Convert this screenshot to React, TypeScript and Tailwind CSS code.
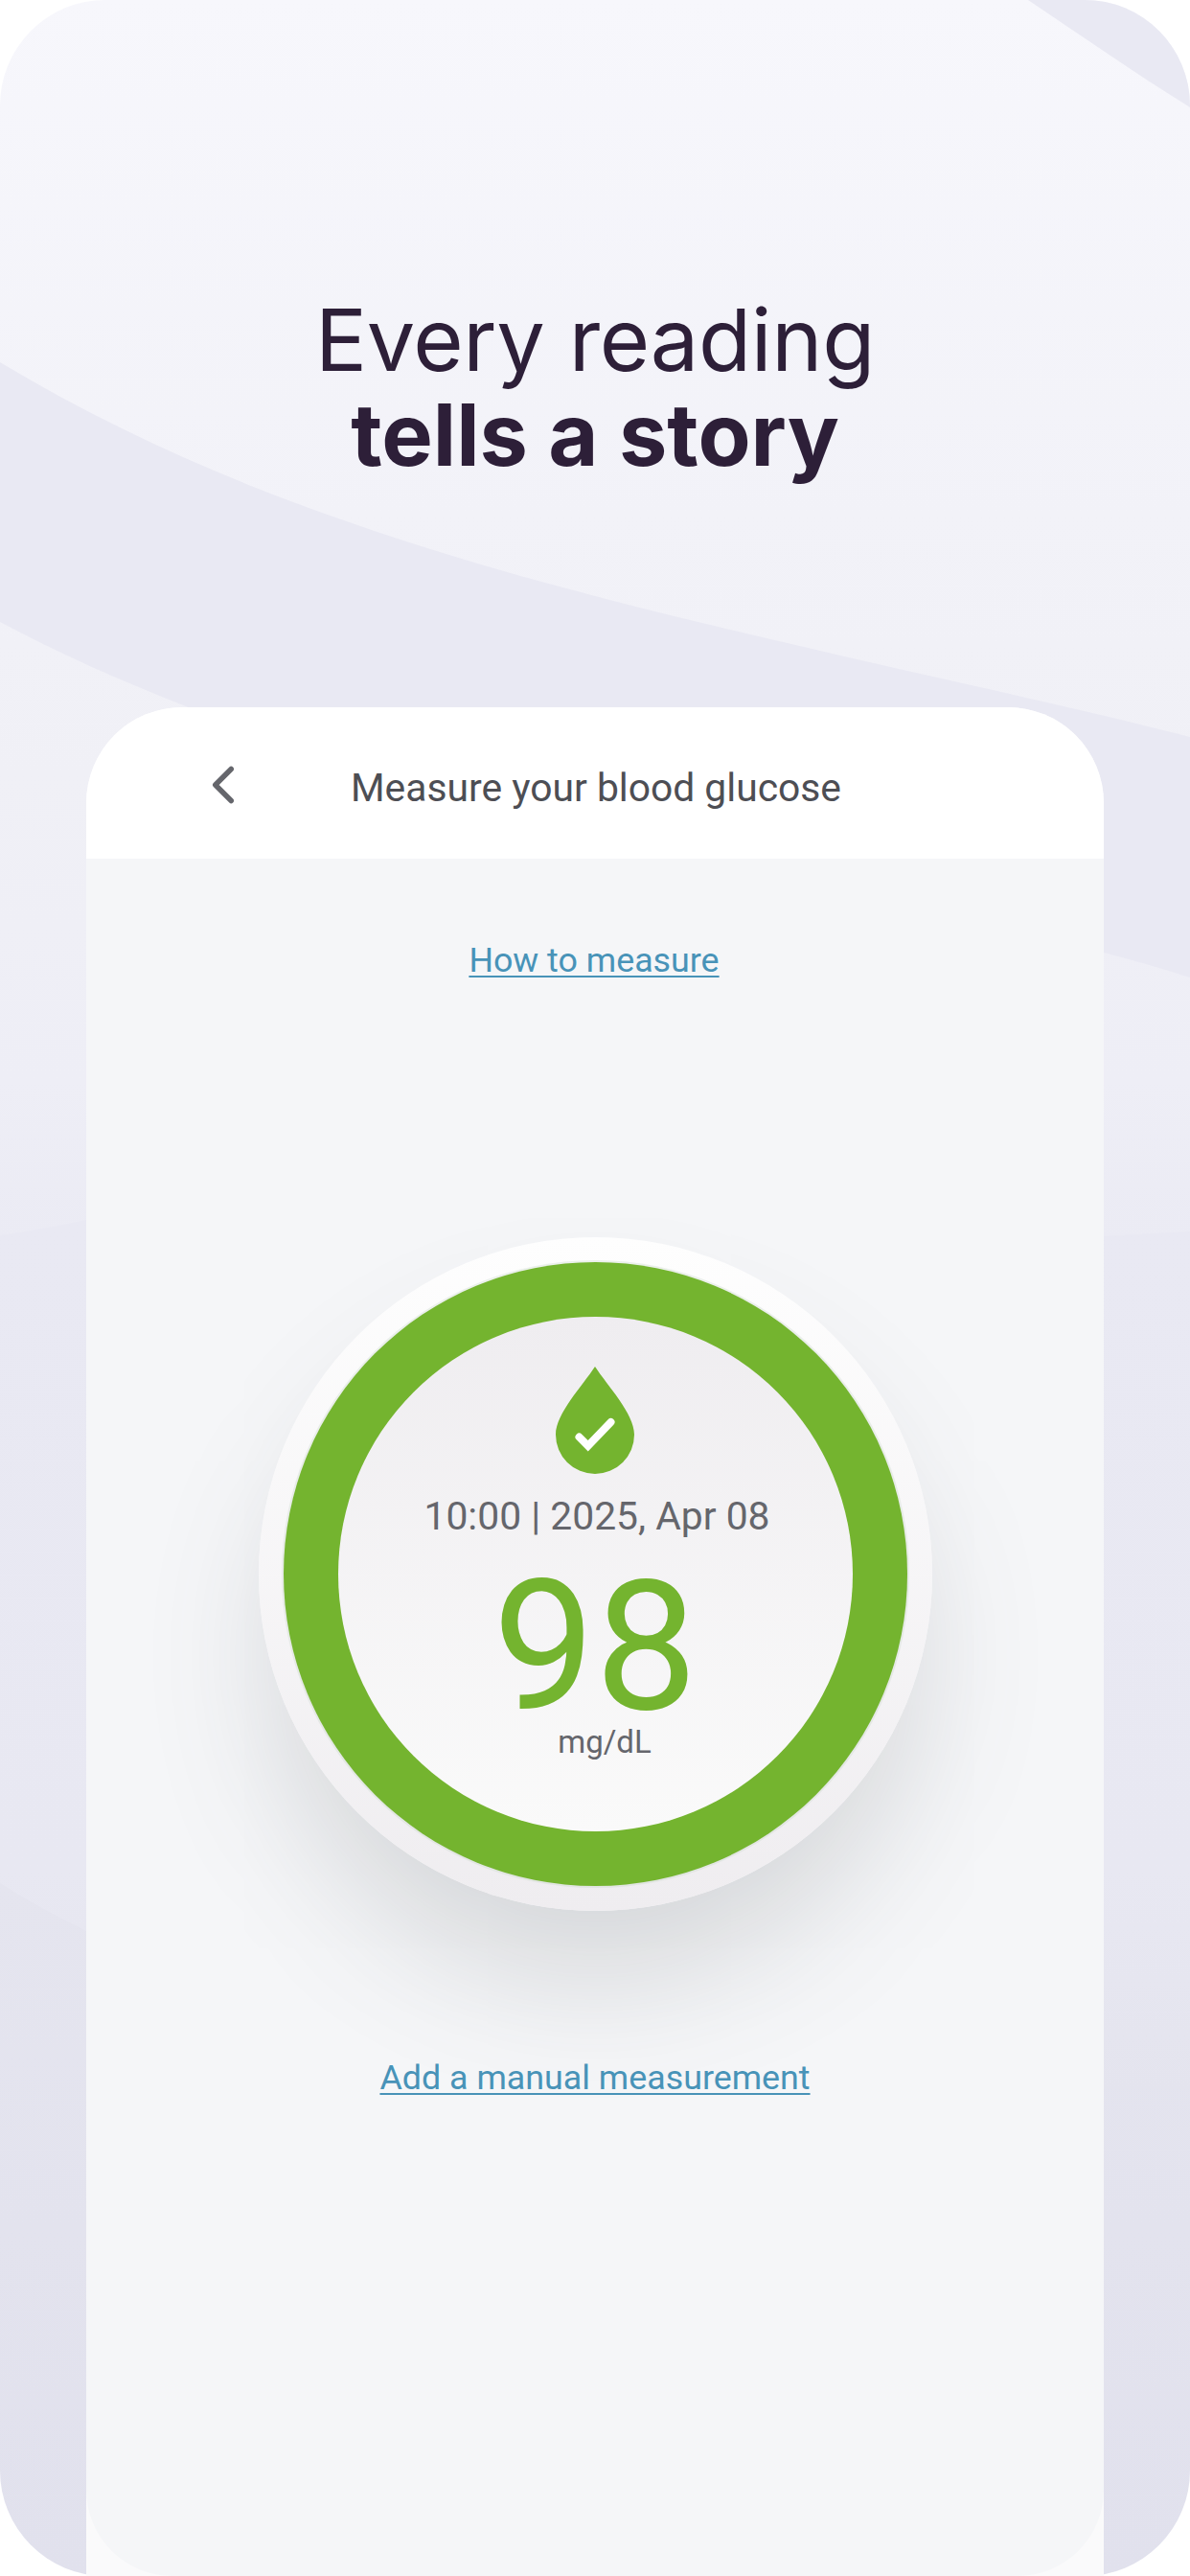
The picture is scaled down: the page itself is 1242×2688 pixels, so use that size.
import React from 'react';
import { ChevronLeft } from 'lucide-react';

const reading = {
    time: '10:00',
    date: '2025, Apr 08',
    value: 98,
    unit: 'mg/dL',
};

const Backdrop = () => (
    <svg className="absolute inset-0 h-full w-full" viewBox="0 0 1242 2688" fill="none" aria-hidden="true">
        <defs>
            <linearGradient id="page" x1="0" y1="0" x2="0" y2="2688" gradientUnits="userSpaceOnUse">
                <stop offset="0" stopColor="#f7f7fc" />
                <stop offset="0.2" stopColor="#f2f2f8" />
                <stop offset="0.3" stopColor="#f0f0f6" />
                <stop offset="0.42" stopColor="#eeeef6" />
                <stop offset="0.48" stopColor="#ebebf4" />
                <stop offset="0.73" stopColor="#e5e5ef" />
                <stop offset="1" stopColor="#e1e1ed" />
            </linearGradient>
            <linearGradient id="wave" x1="0" y1="1270" x2="0" y2="2180" gradientUnits="userSpaceOnUse">
                <stop offset="0" stopColor="#e9e9f3" />
                <stop offset="0.75" stopColor="#e8e8f2" />
                <stop offset="1" stopColor="#e4e4ee" />
            </linearGradient>
        </defs>
        <rect width="1242" height="2688" fill="url(#page)" />
        <path d="M1073 0C1127 36 1184 76 1242 112V0Z" fill="#e9e9f3" />
        <path d="M0 378C115 447 235 500 356 542C500 593 650 631 800 666C960 704 1110 735 1242 769V1020C1210 1010 1180 1001 1152 994C1100 980 1030 965 960 950C690 895 430 845 194 737C125 710 60 681 0 649Z" fill="#e9e9f3" />
        <path d="M0 1289C30 1285 60 1279 90 1273C400 1220 800 1260 1152 1290L1242 1285V2180H500C300 2120 120 2035 90 2015C60 2000 30 1984 0 1965Z" fill="url(#wave)" />
    </svg>
);

const DropIcon = () => (
    <svg width="82" height="112" viewBox="0 0 82 112" fill="none" className="shrink-0">
        <path d="M41 0C54 20 82 49 82 71A41 41 0 0 1 0 71C0 49 28 20 41 0Z" fill="#74b42f" />
        <path d="M24.5 73.5L33.7 82.7L57.5 58" stroke="#fff" strokeWidth="8" strokeLinecap="round" />
    </svg>
);

const ReadingDial = () => (
    <div className="mt-[266px] flex size-[703px] items-center justify-center rounded-full bg-linear-to-b from-[#fefefe] to-[#efedf0] shadow-[0_85px_140px_-20px_rgba(80,85,88,0.2)]">
        <div className="flex size-[651px] items-center justify-center rounded-full bg-[#74b42f] shadow-[0_0_0_2px_rgba(200,215,200,0.35)]">
            <div className="flex size-[537px] flex-col items-center rounded-full bg-linear-to-b from-[#efedf0] to-[#fafafa] pt-[52px]">
                <DropIcon />
                <p className="mt-[19px] ml-1 text-[40.8px] leading-[50px] whitespace-nowrap text-[#65666c]">
                    {reading.time} | {reading.date}
                </p>
                <p className="mt-[31px] text-[190px] leading-[160px] text-[#74b42f]">{reading.value}</p>
                <p className="ml-5 text-[33px] leading-10 text-[#65666c]">{reading.unit}</p>
            </div>
        </div>
    </div>
);

const App = () => {
    return (
        <div className="relative flex h-[2688px] w-[1242px] flex-col items-center overflow-hidden bg-white">
            <div className="absolute inset-0 overflow-hidden rounded-[110px]">
                <Backdrop />
            </div>

            <h1 className="relative mt-[305px] text-center font-[Inter,sans-serif] text-[90px] leading-[99px] font-normal text-[#2d1f38]">
                <span className="tracking-[-0.3px]">Every reading</span>
                <br />
                <strong className="font-bold">tells a story</strong>
            </h1>

            <main className="relative mt-[235px] flex w-[1062px] flex-1 flex-col overflow-hidden rounded-t-[100px] bg-[#fafafb] font-[Roboto,sans-serif]">
                <header className="grid h-[158px] grid-cols-[1fr_auto_1fr] items-center bg-white">
                    <button className="ml-[110px] justify-self-start pt-1 text-[#65666c]" aria-label="Back">
                        <ChevronLeft size={66} strokeWidth={2} />
                    </button>
                    <h2 className="pt-2.5 pl-0.5 text-[40.8px] leading-[50px] text-[#4d4e54]">Measure your blood glucose</h2>
                </header>

                <section className="flex flex-1 flex-col items-center rounded-b-[90px] bg-[#f5f6f8]">
                    <a className="mt-[83px] mr-0.5 text-[35.8px] leading-[46px] text-[#4893b8] underline decoration-2 underline-offset-4">
                        How to measure
                    </a>
                    <ReadingDial />
                    <a className="mt-[151px] text-[35.8px] leading-[46px] text-[#4893b8] underline decoration-2 underline-offset-4">
                        Add a manual measurement
                    </a>
                </section>
            </main>
        </div>
    );
};

export default App;
